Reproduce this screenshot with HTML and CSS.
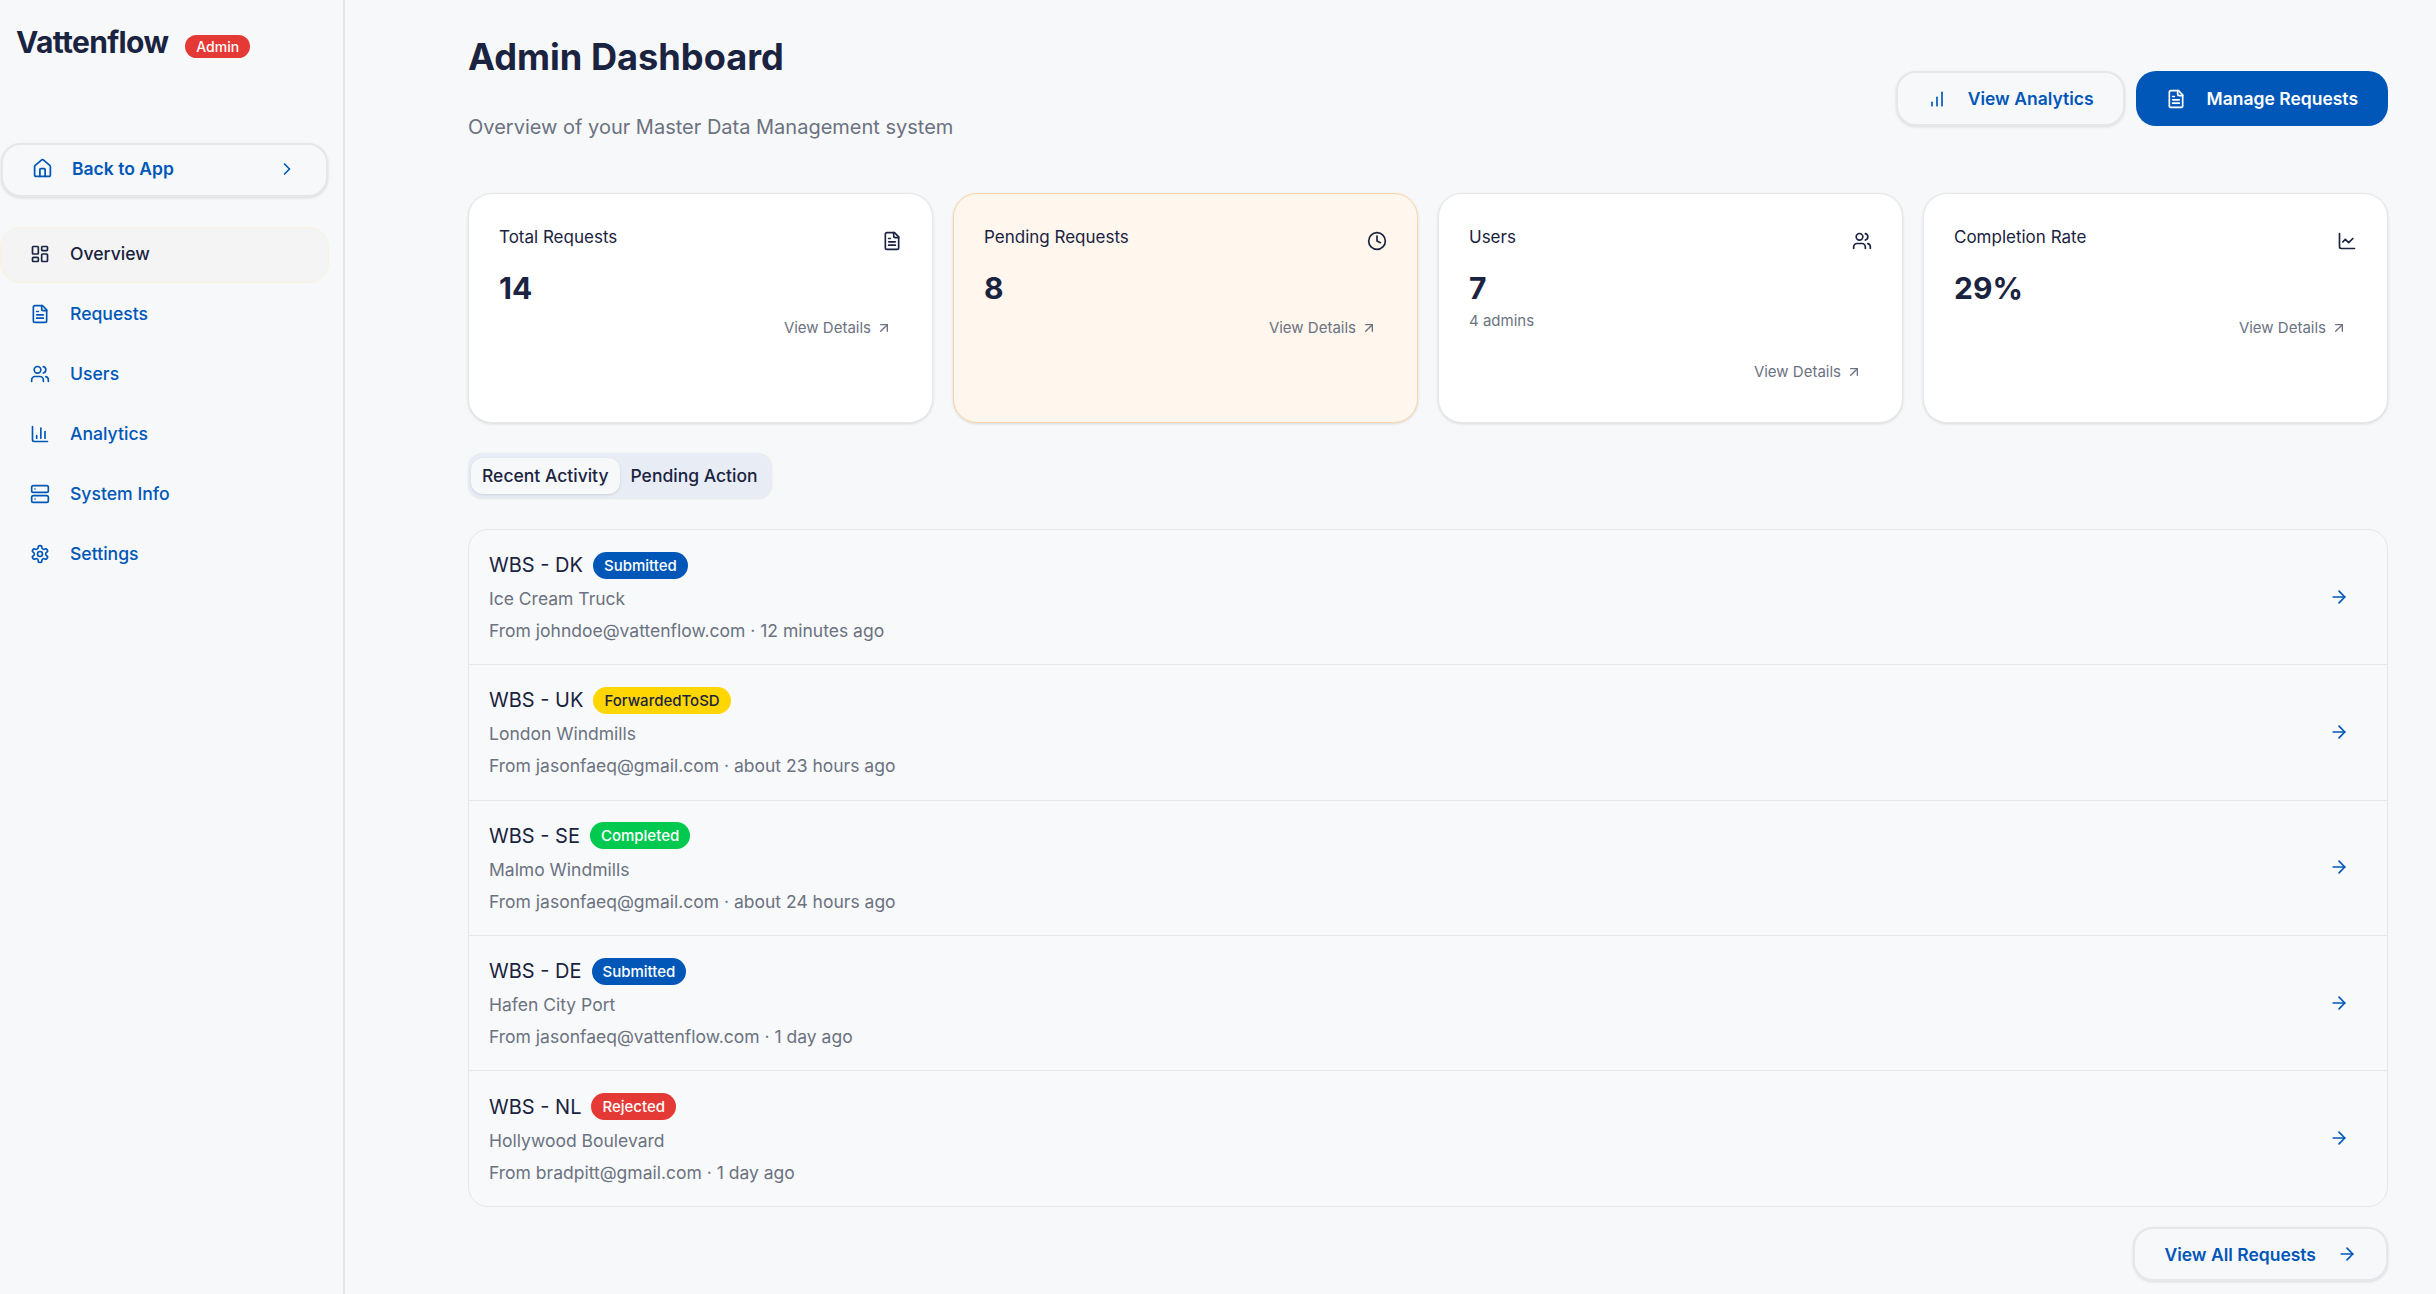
FILE: index.html
```html
<!DOCTYPE html>
<html lang="en">
<head>
  <meta charset="UTF-8" />
  <title>Vattenflow - Admin Dashboard</title>
  <link rel="stylesheet" href="styles.css">
</head>
<body>

<svg class="sprite" xmlns="http://www.w3.org/2000/svg">
  <symbol id="i-home" viewBox="0 0 24 24"><path d="M15 21v-8a1 1 0 0 0-1-1h-4a1 1 0 0 0-1 1v8"/><path d="M3 10a2 2 0 0 1 .709-1.528l7-5.999a2 2 0 0 1 2.582 0l7 5.999A2 2 0 0 1 21 10v9a2 2 0 0 1-2 2H5a2 2 0 0 1-2-2z"/></symbol>
  <symbol id="i-chevron" viewBox="0 0 24 24"><path d="m9 18 6-6-6-6"/></symbol>
  <symbol id="i-dashboard" viewBox="0 0 24 24"><rect x="3" y="3" width="7" height="9" rx="1"/><rect x="14" y="3" width="7" height="5" rx="1"/><rect x="14" y="12" width="7" height="9" rx="1"/><rect x="3" y="16" width="7" height="5" rx="1"/></symbol>
  <symbol id="i-file" viewBox="0 0 24 24"><path d="M15 2H6a2 2 0 0 0-2 2v16a2 2 0 0 0 2 2h12a2 2 0 0 0 2-2V7Z"/><path d="M14 2v4a2 2 0 0 0 2 2h4"/><path d="M10 9H8"/><path d="M16 13H8"/><path d="M16 17H8"/></symbol>
  <symbol id="i-users" viewBox="0 0 24 24"><path d="M16 21v-2a4 4 0 0 0-4-4H6a4 4 0 0 0-4 4v2"/><circle cx="9" cy="7" r="4"/><path d="M22 21v-2a4 4 0 0 0-3-3.87"/><path d="M16 3.13a4 4 0 0 1 0 7.75"/></symbol>
  <symbol id="i-column" viewBox="0 0 24 24"><path d="M3 3v16a2 2 0 0 0 2 2h16"/><path d="M18 17V9"/><path d="M13 17V5"/><path d="M8 17v-3"/></symbol>
  <symbol id="i-signal" viewBox="0 0 24 24"><path d="M12 20V10"/><path d="M18 20V4"/><path d="M6 20v-4"/></symbol>
  <symbol id="i-server" viewBox="0 0 24 24"><rect x="2" y="2" width="20" height="8" rx="2"/><rect x="2" y="14" width="20" height="8" rx="2"/><path d="M6 6h.01"/><path d="M6 18h.01"/></symbol>
  <symbol id="i-settings" viewBox="0 0 24 24"><path d="M12.22 2h-.44a2 2 0 0 0-2 2v.18a2 2 0 0 1-1 1.73l-.43.25a2 2 0 0 1-2 0l-.15-.08a2 2 0 0 0-2.73.73l-.22.38a2 2 0 0 0 .73 2.73l.15.1a2 2 0 0 1 1 1.72v.51a2 2 0 0 1-1 1.74l-.15.09a2 2 0 0 0-.73 2.73l.22.38a2 2 0 0 0 2.73.73l.15-.08a2 2 0 0 1 2 0l.43.25a2 2 0 0 1 1 1.73V20a2 2 0 0 0 2 2h.44a2 2 0 0 0 2-2v-.18a2 2 0 0 1 1-1.73l.43-.25a2 2 0 0 1 2 0l.15.08a2 2 0 0 0 2.73-.73l.22-.39a2 2 0 0 0-.73-2.73l-.15-.08a2 2 0 0 1-1-1.74v-.5a2 2 0 0 1 1-1.74l.15-.09a2 2 0 0 0 .73-2.73l-.22-.38a2 2 0 0 0-2.73-.73l-.15.08a2 2 0 0 1-2 0l-.43-.25a2 2 0 0 1-1-1.73V4a2 2 0 0 0-2-2z"/><circle cx="12" cy="12" r="3"/></symbol>
  <symbol id="i-clock" viewBox="0 0 24 24"><circle cx="12" cy="12" r="10"/><path d="M12 6v6l4 2"/></symbol>
  <symbol id="i-line" viewBox="0 0 24 24"><path d="M3 3v16a2 2 0 0 0 2 2h16"/><path d="m19 9-5 5-4-4-3 3"/></symbol>
  <symbol id="i-up-right" viewBox="0 0 24 24"><path d="M7 7h10v10"/><path d="M7 17 17 7"/></symbol>
  <symbol id="i-arrow" viewBox="0 0 24 24"><path d="M5 12h14"/><path d="m12 5 7 7-7 7"/></symbol>
</svg>

<div class="layout">
  <aside class="sidebar">
    <div class="brand">
      <span class="brand-name">Vattenflow</span>
      <span class="admin-tag">Admin</span>
    </div>

    <a class="btn-outline back-link" href="#">
      <svg class="icon icon-21"><use href="#i-home"/></svg>
      <span class="back-label">Back to App</span>
      <svg class="icon icon-20"><use href="#i-chevron"/></svg>
    </a>

    <nav class="side-nav">
      <a class="nav-item active" href="#"><svg class="icon icon-20"><use href="#i-dashboard"/></svg>Overview</a>
      <a class="nav-item" href="#"><svg class="icon icon-20"><use href="#i-file"/></svg>Requests</a>
      <a class="nav-item" href="#"><svg class="icon icon-20"><use href="#i-users"/></svg>Users</a>
      <a class="nav-item" href="#"><svg class="icon icon-20"><use href="#i-column"/></svg>Analytics</a>
      <a class="nav-item" href="#"><svg class="icon icon-20"><use href="#i-server"/></svg>System Info</a>
      <a class="nav-item" href="#"><svg class="icon icon-20"><use href="#i-settings"/></svg>Settings</a>
    </nav>
  </aside>

  <main class="main">
    <header class="page-head">
      <div>
        <h1>Admin Dashboard</h1>
        <p class="subtitle">Overview of your Master Data Management system</p>
      </div>
      <div class="head-actions">
        <a class="btn-outline btn-head" href="#"><svg class="icon icon-20"><use href="#i-signal"/></svg>View Analytics</a>
        <a class="btn-primary btn-head" href="#"><svg class="icon icon-20"><use href="#i-file"/></svg>Manage Requests</a>
      </div>
    </header>

    <section class="stats">
      <div class="card">
        <div class="card-top"><span class="card-title">Total Requests</span><svg class="icon icon-20"><use href="#i-file"/></svg></div>
        <div class="card-value">14</div>
        <a class="card-link" href="#">View Details<svg class="icon icon-16"><use href="#i-up-right"/></svg></a>
      </div>
      <div class="card card-warn">
        <div class="card-top"><span class="card-title">Pending Requests</span><svg class="icon icon-20"><use href="#i-clock"/></svg></div>
        <div class="card-value">8</div>
        <a class="card-link" href="#">View Details<svg class="icon icon-16"><use href="#i-up-right"/></svg></a>
      </div>
      <div class="card">
        <div class="card-top"><span class="card-title">Users</span><svg class="icon icon-20"><use href="#i-users"/></svg></div>
        <div class="card-value">7</div>
        <div class="card-note">4 admins</div>
        <a class="card-link" href="#">View Details<svg class="icon icon-16"><use href="#i-up-right"/></svg></a>
      </div>
      <div class="card">
        <div class="card-top"><span class="card-title">Completion Rate</span><svg class="icon icon-20"><use href="#i-line"/></svg></div>
        <div class="card-value">29%</div>
        <a class="card-link" href="#">View Details<svg class="icon icon-16"><use href="#i-up-right"/></svg></a>
      </div>
    </section>

    <div class="tabs">
      <button class="tab active">Recent Activity</button>
      <button class="tab">Pending Action</button>
    </div>

    <section class="activity">
      <div class="row">
        <div class="row-body">
          <div class="row-title">WBS - DK <span class="badge badge-blue">Submitted</span></div>
          <div class="row-sub">Ice Cream Truck</div>
          <div class="row-meta">From johndoe@vattenflow.com · 12 minutes ago</div>
        </div>
        <svg class="icon icon-20 row-arrow"><use href="#i-arrow"/></svg>
      </div>
      <div class="row">
        <div class="row-body">
          <div class="row-title">WBS - UK <span class="badge badge-yellow">ForwardedToSD</span></div>
          <div class="row-sub">London Windmills</div>
          <div class="row-meta">From jasonfaeq@gmail.com · about 23 hours ago</div>
        </div>
        <svg class="icon icon-20 row-arrow"><use href="#i-arrow"/></svg>
      </div>
      <div class="row">
        <div class="row-body">
          <div class="row-title">WBS - SE <span class="badge badge-green">Completed</span></div>
          <div class="row-sub">Malmo Windmills</div>
          <div class="row-meta">From jasonfaeq@gmail.com · about 24 hours ago</div>
        </div>
        <svg class="icon icon-20 row-arrow"><use href="#i-arrow"/></svg>
      </div>
      <div class="row">
        <div class="row-body">
          <div class="row-title">WBS - DE <span class="badge badge-blue">Submitted</span></div>
          <div class="row-sub">Hafen City Port</div>
          <div class="row-meta">From jasonfaeq@vattenflow.com · 1 day ago</div>
        </div>
        <svg class="icon icon-20 row-arrow"><use href="#i-arrow"/></svg>
      </div>
      <div class="row">
        <div class="row-body">
          <div class="row-title">WBS - NL <span class="badge badge-red">Rejected</span></div>
          <div class="row-sub">Hollywood Boulevard</div>
          <div class="row-meta">From bradpitt@gmail.com · 1 day ago</div>
        </div>
        <svg class="icon icon-20 row-arrow"><use href="#i-arrow"/></svg>
      </div>
    </section>

    <div class="list-foot">
      <a class="btn-outline btn-all" href="#">View All Requests<svg class="icon icon-20"><use href="#i-arrow"/></svg></a>
    </div>
  </main>
</div>

</body>
</html>
```

FILE: styles.css
```css
:root {
  --bg: #f7f8fa;
  --ink: #1a2340;
  --blue: #0057b8;
  --muted: #6b7280;
  --line: #e5e7eb;
}

* {
  box-sizing: border-box;
}
html, body {
  height: 100%;
}
body {
  margin: 0;
  background-color: var(--bg);
  color: var(--ink);
  font-family: Inter, "Liberation Sans", sans-serif;
  overflow: hidden;
}
a {
  color: inherit;
  text-decoration: none;
}
.sprite {
  display: none;
}

.icon {
  fill: none;
  stroke: currentColor;
  stroke-width: 2;
  stroke-linecap: round;
  stroke-linejoin: round;
  flex: none;
}
.icon-21 { width: 21px; height: 21px; }
.icon-20 { width: 20px; height: 20px; }
.icon-16 { width: 16px; height: 16px; }

.layout {
  display: flex;
  height: 100%;
}

/* Sidebar */
.sidebar {
  width: 345px;
  flex: none;
  border-right: 2px solid var(--line);
  padding-top: 24px;
}
.brand {
  display: flex;
  align-items: center;
  gap: 17px;
  padding-left: 16px;
  height: 36px;
}
.brand-name {
  font-size: 30px;
  font-weight: 700;
  letter-spacing: -0.65px;
}
.admin-tag {
  background-color: #e53935;
  color: #fff;
  font-size: 14px;
  font-weight: 500;
  padding: 3px 11px;
  border-radius: 13px;
  margin-top: 8px;
}

.btn-outline {
  display: flex;
  align-items: center;
  background-color: var(--bg);
  border: 2px solid #e6e7ea;
  box-shadow: 0 1px 3px rgba(0,0,0,0.12);
  color: var(--blue);
  font-weight: 600;
}
.back-link {
  margin: 83px 15px 0 1px;
  height: 54px;
  border-radius: 20px;
  padding: 0 29px 3px 29px;
  font-size: 17.5px;
}
.back-label {
  flex: 1;
  margin-left: 19px;
}

.side-nav {
  display: flex;
  flex-direction: column;
  margin-top: 30px;
}
.nav-item {
  display: flex;
  align-items: center;
  gap: 20px;
  height: 60px;
  padding: 0 0 1px 30px;
  margin-right: 14px;
  color: var(--blue);
  font-size: 17.6px;
  font-weight: 500;
}
.nav-item.active {
  height: 56px;
  margin-bottom: 1px;
  padding: 0 0 3px 29px;
  color: var(--ink);
  background-color: #f4f4f4;
  border: 1px solid #faf3dc;
  border-radius: 20px;
}

/* Main */
.main {
  flex: 1;
  padding: 32px 48px 0 123px;
}
.page-head {
  display: flex;
  justify-content: space-between;
  align-items: flex-start;
  height: 161px;
}
h1 {
  margin: 0;
  font-size: 36.2px;
  line-height: 50px;
  font-weight: 700;
}
.subtitle {
  margin: 33px 0 0;
  font-size: 20px;
  color: var(--muted);
}
.head-actions {
  display: flex;
  gap: 11px;
  margin-top: 39px;
}
.btn-head {
  height: 55px;
  border-radius: 20px;
  font-size: 17.5px;
  gap: 21px;
  padding: 0 30px;
}
.btn-head.btn-outline {
  padding: 0 29px;
}
.btn-primary {
  display: flex;
  align-items: center;
  background-color: var(--blue);
  color: #fff;
  font-weight: 600;
}

.stats {
  display: grid;
  grid-template-columns: repeat(4, 1fr);
  gap: 20px;
  height: 230px;
}
.card {
  position: relative;
  background-color: #fff;
  border: 1px solid var(--line);
  border-radius: 24px;
  box-shadow: 0 1px 3px rgba(0,0,0,0.12);
  padding: 30px;
}
.card-warn {
  background-color: #fff6ee;
  border-color: #fbd5a5;
}
.card-top {
  display: flex;
  justify-content: space-between;
  align-items: flex-start;
}
.card-top .icon {
  margin-top: 7px;
}
.card-title {
  font-size: 17px;
  font-weight: 400;
  line-height: 27px;
}
.card-value {
  font-size: 30px;
  font-weight: 700;
  line-height: 40px;
  margin-top: 17px;
}
.card-note {
  font-size: 15px;
  color: var(--muted);
  margin-top: 3px;
}
.card-link {
  display: flex;
  justify-content: flex-end;
  align-items: center;
  gap: 5px;
  margin-top: 10px;
  padding-right: 10px;
  color: var(--muted);
  font-size: 15px;
}
.card-note + .card-link {
  margin-top: 32px;
}

.tabs {
  display: inline-flex;
  align-items: center;
  margin-top: 30px;
  padding: 4px 3px;
  height: 45px;
  background-color: #e8edf5;
  border-radius: 14px;
  box-shadow: 0 1px 2px rgba(0,0,0,0.08);
}
.tab {
  border: none;
  background: none;
  color: var(--ink);
  font: inherit;
  font-size: 17.5px;
  font-weight: 500;
  height: 36px;
  padding: 0 11px;
  border-radius: 12px;
}
.tab.active {
  background-color: var(--bg);
  box-shadow: 0 1px 3px rgba(0,0,0,0.12);
}

.activity {
  margin-top: 31px;
  border: 1px solid var(--line);
  border-radius: 20px;
  background-color: #f8f9fb;
}
.row {
  display: flex;
  align-items: center;
  justify-content: space-between;
  height: 135.3px;
  padding: 1px 38px 0 20px;
  border-bottom: 1px solid var(--line);
}
.row:last-child {
  border-bottom: none;
}
.row-title {
  display: flex;
  align-items: center;
  gap: 10px;
  font-size: 20px;
  line-height: 28px;
}
.row-sub,
.row-meta {
  font-size: 17.5px;
  color: var(--muted);
}
.row-sub {
  margin-top: 7px;
  line-height: 26px;
}
.row-meta {
  margin-top: 6px;
  line-height: 26px;
}
.badge {
  font-size: 15px;
  font-weight: 500;
  padding: 3px 11px;
  border-radius: 14px;
  line-height: 21px;
  color: #fff;
}
.badge-blue { background-color: var(--blue); }
.badge-yellow { background-color: #ffd600; color: #1a2340; }
.badge-green { background-color: #00c94f; }
.badge-red { background-color: #e53935; }
.row-arrow {
  color: var(--blue);
  margin-top: -2px;
}

.list-foot {
  display: flex;
  justify-content: flex-end;
  margin-top: 20px;
}
.btn-all {
  height: 54px;
  border-radius: 20px;
  padding: 0 29px;
  gap: 21px;
  font-size: 17.5px;
}
```
